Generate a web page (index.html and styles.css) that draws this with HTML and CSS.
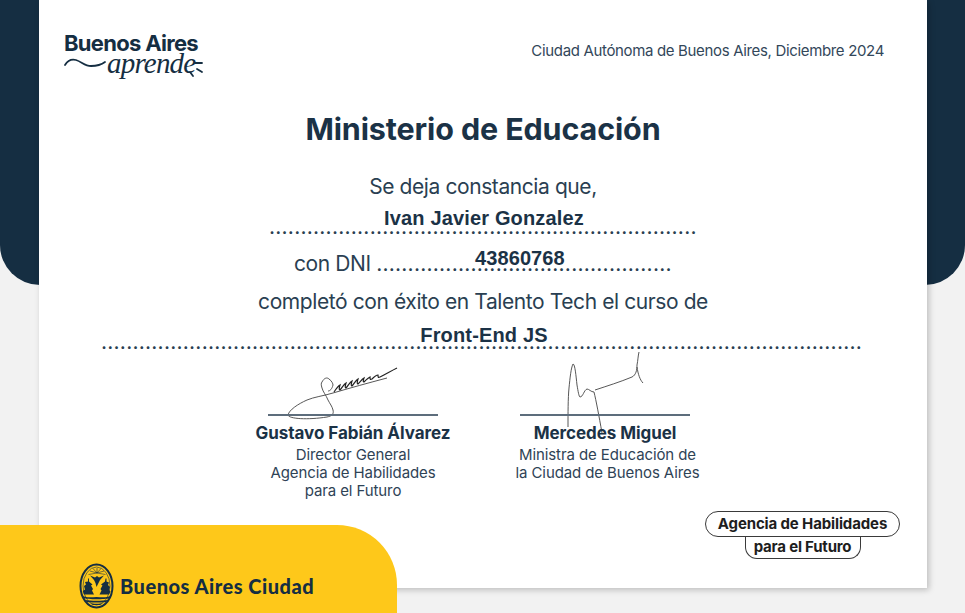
FILE: index.html
```html
<!DOCTYPE html>
<html lang="es">
<head>
<meta charset="utf-8">
<title>Certificado</title>
<link rel="stylesheet" href="styles.css">
</head>
<body>
<div class="stage">
  <div class="band"></div>
  <main class="card">
    <header class="top">
      <div class="brand">
        <span class="brand-name">Buenos Aires</span>
        <svg class="brand-svg" width="140" height="58" viewBox="0 0 140 58" aria-hidden="true">
          <path class="swash" d="M2 24C5 19 9 18 13 19C19 21 22 25 28 25C34 25 38 24 42 21"/>
          <text class="script" x="44" y="32">aprende</text>
          <path class="spark" d="M132 22L139 22M134 28L139 31M127 31L130 35"/>
        </svg>
      </div>
      <p class="place">Ciudad Autónoma de Buenos Aires, Diciembre 2024</p>
    </header>
    <h1 class="title">Ministerio de Educación</h1>
    <p class="line line-intro">Se deja constancia que,</p>
    <div class="field field-name"><strong class="value">Ivan Javier Gonzalez</strong><span class="dots field-dots">....................................................................</span></div>
    <p class="line line-dni">con DNI <span class="dots">...............................................</span><strong class="value dni">43860768</strong></p>
    <p class="line line-course">completó con éxito en Talento Tech el curso de</p>
    <div class="field field-course"><strong class="value">Front-End JS</strong><span class="dots field-dots">.........................................................................................................................</span></div>
    <section class="signers">
      <div class="signer signer-a">
        <svg class="sign" width="170" height="66" viewBox="0 0 170 66" aria-hidden="true">
          <path class="ink" d="M119 30C100 35 82 40 65 45C55 48 46 49 39 52C30 56 21 62 20 67C21 71 40 72 59 69C64 68 66 66 65 62C64 58 62 56 60 52C58 47 55 44 54 40C53 37 53 35 54 34C56 30 59 29 61 31C64 33 65 36 65 37C64 41 62 43 60 43"/>
          <path class="ink thick" d="M66 44C68 41 70 38 72 37C71 40 71 42 72 42C74 40 76 36 78 35C77 38 77 40 78 40C80 38 82 34 84 33C83 36 83 38 84 38C86 36 88 32 90 31C89 34 89 36 90 36C92 34 94 31 96 30C95 33 95 34 96 34C98 32 100 30 102 29C102 31 102 32 104 31C106 29 108 27 110 27C110 29 110 30 112 29C118 26 123 23 129 20"/>
        </svg>
        <div class="rule"></div>
        <strong class="signer-name">Gustavo Fabián Álvarez</strong>
        <p class="signer-role">Director General<br>Agencia de Habilidades<br>para el Futuro</p>
      </div>
      <div class="signer signer-b">
        <svg class="sign" width="170" height="66" viewBox="0 0 170 66" aria-hidden="true">
          <path class="ink" d="M48 79C48 66 48 50 49 40C50 30 51 20 53 16C55 16 56 28 57 37C58 43 59 49 60 49C63 49 64 42 67 41C69 41 71 44 74 44C76 52 79 68 82 85"/>
          <path class="ink" d="M75 42C87 38 100 34 112 29C116 27 117 22 117 17C118 12 118 8 119 4M117 19C118 26 120 32 123 35"/>
        </svg>
        <div class="rule"></div>
        <strong class="signer-name">Mercedes Miguel</strong>
        <p class="signer-role signer-role-b">Ministra de Educación de<br>la Ciudad de Buenos Aires</p>
      </div>
    </section>
    <div class="agency">
      <span class="agency-top">Agencia de Habilidades</span>
      <span class="agency-bottom">para el Futuro</span>
    </div>
  </main>
  <footer class="city">
    <svg class="shield" width="36" height="46" viewBox="0 0 36 46" aria-hidden="true">
      <ellipse cx="17.5" cy="23" rx="16" ry="21.5" class="shield-line"/>
      <ellipse cx="17.5" cy="23" rx="13.5" ry="19" class="shield-thin"/>
      <path class="shield-thin" d="M18 10V5M18 10L14 5.5M18 10L22 5.5M18 10L11 8M18 10L25 8M18 10L9.5 11.5M18 10L26.5 11.5"/>
      <path class="shield-fill" d="M11 12.5L16 14.5L18 13L20 14.5L25 12.5L21 17L19 21L17.5 24L16.5 20L15 17Z"/>
      <path class="shield-fill" d="M9 15.5H10V18.5L13.5 21.5L12 22.5L14 26L13 27.5L15 31.5H5L3.8 28L6 26.5L5 23L7 21.5L6 19L9 18.5Z"/>
      <path class="shield-fill" d="M26.5 15.5H27.5V18.5L30 19.5L29 22L31 24L30 27L31.5 28.5L30 31.5H20.5L22.5 27.5L21.5 26L23.5 22.5L22 21.5L26 18.5Z"/>
      <path class="shield-fill" d="M3.5 33C8 35 13 34 17.5 34S27 35 31.5 33L30.5 35.2C26 36.5 9 36.5 4.5 35.2ZM6 37C11 38 24 38 29 37L27 39C23 39.8 12 39.8 8 39ZM11 40.3C15 41 20 41 24 40.3L21 42H14Z"/>
    </svg>
    <span class="city-name">Buenos Aires Ciudad</span>
  </footer>
</div>
</body>
</html>
```
FILE: styles.css
```css
* { box-sizing: border-box; }
html, body { margin: 0; padding: 0; }
body { background: #f2f2f2; font-family: Inter, "Liberation Sans", sans-serif; color: #1b3246; }
.stage { position: relative; width: 965px; height: 613px; overflow: hidden; }
.band { position: absolute; left: 0; top: 0; width: 965px; height: 285px; background: #152e42; border-radius: 0 0 40px 40px; }
.card { position: relative; width: 888px; height: 588px; margin-left: 39px; background: #fff; box-shadow: 2px 2px 6px rgba(0,0,0,.22); display: flex; flex-direction: column; align-items: center; }
.top { width: 100%; height: 110px; padding: 0 43px 0 24px; display: flex; justify-content: space-between; }
.brand { position: relative; width: 140px; height: 60px; margin-top: 33px; }
.brand-name { position: absolute; left: 1px; top: 0; font-size: 22px; font-weight: 700; letter-spacing: -.7px; line-height: 21px; color: #152e42; white-space: nowrap; }
.brand-svg { position: absolute; left: 0; top: 8px; overflow: visible; }
.swash, .spark { fill: none; stroke: #152e42; stroke-width: 1.8; stroke-linecap: round; }
.script { font-family: "Liberation Serif", serif; font-style: italic; font-size: 29px; fill: #152e42; letter-spacing: -.8px; }
.place { margin: 42px 0 0; font-size: 15px; letter-spacing: -.34px; line-height: 18px; color: #33475a; }
.title { margin: 0; font-size: 30.5px; font-weight: 700; line-height: 38px; letter-spacing: -.13px; color: #1b3246; }
.line { margin: 0; font-size: 21px; line-height: 26px; letter-spacing: -.41px; color: #2a3f52; white-space: nowrap; }
.line-intro { margin-top: 26px; }
.value { font-family: "Liberation Sans", sans-serif; font-weight: 700; font-size: 20px; line-height: 24px; letter-spacing: .16px; color: #1b3246; }
.field { display: flex; flex-direction: column; align-items: center; }
.field-name { width: 426px; height: 32px; margin-top: 2px; padding: 4px 0 0 2px; }
.field-course { width: 762px; height: 32px; margin-top: 1px; padding: 7px 0 0 2px; }
.field-dots { display: block; align-self: flex-start; height: 26px; margin-left: -3px; font-size: 21px; line-height: 26px; color: #2a3f52; white-space: nowrap; }
.field-name .field-dots { margin-top: -16px; }
.field-course .field-dots { margin-top: -18px; }
.line-dni { position: relative; width: 378px; margin-top: 17px; }
.dots { letter-spacing: .24px; }
.dni { position: absolute; left: 181px; top: -5px; letter-spacing: .1px; }
.line-course { margin-top: 12px; }
.signers { display: flex; width: 100%; height: 148px; }
.signer { position: relative; width: 252px; display: flex; flex-direction: column; align-items: center; text-align: center; }
.signer-a { margin-left: 188px; }
.sign { display: block; flex: none; overflow: visible; }
.ink { fill: none; stroke: #444; stroke-width: .9; }
.thick { stroke: #222; stroke-width: 1.2; }
.rule { width: 170px; height: 2px; background: #5d6d7c; flex: none; }
.signer-name { margin-top: 7px; font-size: 17px; font-weight: 700; line-height: 20px; letter-spacing: -.05px; color: #1b3246; white-space: nowrap; }
.signer-role { margin: 3px 0 0; font-size: 15px; line-height: 18px; letter-spacing: -.1px; color: #2f4356; white-space: nowrap; }
.signer-role-b { padding-left: 5px; }
.agency { position: absolute; left: 666px; top: 511px; width: 195px; display: flex; flex-direction: column; align-items: center; color: #1e1e1e; font-weight: 700; }
.agency-top { width: 195px; height: 26px; border: 1px solid #3a3a3a; border-radius: 13px; background: #fff; text-align: center; font-size: 15px; line-height: 23px; letter-spacing: -.13px; }
.agency-bottom { width: 116px; height: 23px; margin-top: -1px; border: 1px solid #3a3a3a; border-top: 0; border-radius: 0 0 12px 12px; text-align: center; font-size: 15px; line-height: 21px; letter-spacing: -.2px; }
.city { position: absolute; left: 0; top: 525px; width: 397px; height: 88px; background: #fec81a; border-radius: 0 60px 0 0; display: flex; align-items: center; padding: 34px 0 0 79px; gap: 5px; }
.shield { flex: none; }
.shield-line { fill: none; stroke: #152e42; stroke-width: 2; }
.shield-thin { fill: none; stroke: #152e42; stroke-width: .6; }
.shield-fill { fill: #152e42; }
.city-name { font-family: Lato, "Liberation Sans", sans-serif; font-weight: 900; font-size: 20px; letter-spacing: .5px; color: #152e42; white-space: nowrap; }
```
